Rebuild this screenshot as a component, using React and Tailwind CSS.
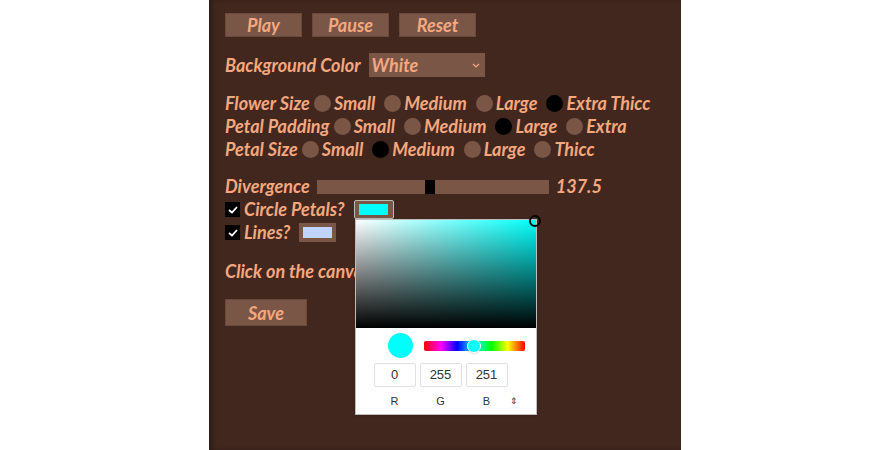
import React, { useState } from 'react';

const font = { fontFamily: '"Lato", "DejaVu Sans", sans-serif' };
const plain = { fontFamily: '"Liberation Sans", Arial, sans-serif' };

const Radio = ({ checked }) => (
    <span
        className={`inline-block shrink-0 w-[17px] h-[17px] rounded-full mx-[2px] ${
            checked ? 'bg-black' : 'bg-[#7a5646]'
        }`}
    />
);

const RadioRow = ({ label, options, selected }) => (
    <div className="flex items-center h-[23px] whitespace-nowrap">
        <span>{label}</span>
        {options.map((opt) => (
            <span key={opt} className="flex items-center ml-[2px] mr-[5px]">
                <Radio checked={opt === selected} />
                <span className="ml-[1px]">{opt}</span>
            </span>
        ))}
    </div>
);

const Checkbox = () => (
    <span className="inline-flex shrink-0 items-center justify-center w-[15px] h-[15px] bg-black mr-[4px]">
        <svg width="10" height="8" viewBox="0 0 10 8">
            <path d="M1 4 L4 6.5 L9 1" stroke="white" strokeWidth="1.8" fill="none" />
        </svg>
    </span>
);

const ColorPicker = () => (
    <div
        className="absolute left-[1px] top-[19px] w-[182px] bg-white border border-[#bdbdbd] shadow z-10 not-italic font-normal"
        style={plain}
    >
        <div
            className="relative h-[108px]"
            style={{
                background:
                    'linear-gradient(to top, #000, rgba(0,0,0,0)), linear-gradient(to right, #fff, #00fffb)',
            }}
        >
            <span className="absolute -right-[5px] -top-[5px] w-[12px] h-[12px] rounded-full border-2 border-black" />
        </div>
        <div className="flex items-center pl-[32px] pt-[5px]">
            <span className="shrink-0 w-[25px] h-[25px] rounded-full bg-[#00fffb]" />
            <div
                className="relative ml-[11px] w-[101px] h-[10px] rounded-[2px]"
                style={{
                    background:
                        'linear-gradient(to right, #f00, #f0f 17%, #00f 33%, #0ff 50%, #0f0 67%, #ff0 83%, #f00)',
                }}
            >
                <span className="absolute left-[43px] -top-[2px] w-[14px] h-[14px] rounded-full bg-[#00fffb] border border-white shadow" />
            </div>
        </div>
        <div className="flex gap-[4px] pl-[18px] pt-[5px] text-[13px] text-[#333]">
            {['0', '255', '251'].map((v) => (
                <div key={v} className="w-[42px] h-[24px] border border-[#e0e0e0] rounded-[2px] flex items-center justify-center">
                    {v}
                </div>
            ))}
        </div>
        <div className="flex items-center pl-[18px] pt-[6px] pb-[4px] text-[11px] text-[#333]">
            {['R', 'G', 'B'].map((v) => (
                <div key={v} className="w-[42px] mr-[4px] text-center">{v}</div>
            ))}
            <span className="text-[9px] -ml-[2px]">⇕</span>
        </div>
    </div>
);

const App = () => {
    const [bg] = useState('White');

    return (
        <div className="w-full h-[450px] bg-white flex justify-center">
            <div
                className="w-[472px] h-full bg-[#42271e] text-[#f5a77f] pl-[16px] pt-[13px] text-[18px] font-bold italic shadow-[inset_4px_0_4px_rgba(0,0,0,0.25)]"
                style={font}
            >
                {/* Controls */}
                <div className="flex gap-[10px]">
                    {['Play', 'Pause', 'Reset'].map((b) => (
                        <button key={b} className="w-[77px] h-[24px] bg-[#7a5646] border border-[#6a4a3c] leading-none">
                            {b}
                        </button>
                    ))}
                </div>

                <div className="flex items-center mt-[16px] h-[24px]">
                    <span>Background Color</span>
                    <div className="ml-[8px] w-[116px] h-[24px] bg-[#7a5646] flex items-center justify-between px-[3px]">
                        <span>{bg}</span>
                        <svg width="8" height="5" viewBox="0 0 8 5" className="mr-[2px]">
                            <path d="M1 1 L4 4 L7 1" stroke="#f5a77f" strokeWidth="1.2" fill="none" />
                        </svg>
                    </div>
                </div>

                <div className="mt-[15px]">
                    <RadioRow label="Flower Size" options={['Small', 'Medium', 'Large', 'Extra Thicc']} selected="Extra Thicc" />
                    <RadioRow label="Petal Padding" options={['Small', 'Medium', 'Large', 'Extra']} selected="Large" />
                    <RadioRow label="Petal Size" options={['Small', 'Medium', 'Large', 'Thicc']} selected="Medium" />
                </div>

                <div className="flex items-center mt-[14px] h-[23px]">
                    <span>Divergence</span>
                    <div className="relative ml-[7px] w-[232px] h-[14px] bg-[#7a5646]">
                        <span className="absolute left-[108px] top-0 w-[10px] h-[14px] bg-black" />
                    </div>
                    <span className="ml-[7px]">137.5</span>
                </div>

                <div className="flex items-center h-[23px]">
                    <Checkbox />
                    <span>Circle Petals?</span>
                    <div className="relative ml-[9px]">
                        <div className="w-[40px] h-[19px] bg-[#7a5646] border border-[#bbb] rounded-[2px] flex items-center justify-center">
                            <span className="w-[29px] h-[11px] bg-[#00fffb]" />
                        </div>
                        <ColorPicker />
                    </div>
                </div>

                <div className="flex items-center h-[23px]">
                    <Checkbox />
                    <span>Lines?</span>
                    <div className="ml-[9px] w-[37px] h-[19px] bg-[#7a5646] flex items-center justify-center">
                        <span className="w-[29px] h-[11px] bg-[#c0d4ff]" />
                    </div>
                </div>

                <div className="mt-[16px] h-[23px] flex items-center whitespace-nowrap">
                    Click on the canvas to place a flower
                </div>

                <button className="mt-[16px] w-[82px] h-[27px] bg-[#7a5646] border border-[#6a4a3c]">
                    Save
                </button>
            </div>
        </div>
    );
};

export default App;
